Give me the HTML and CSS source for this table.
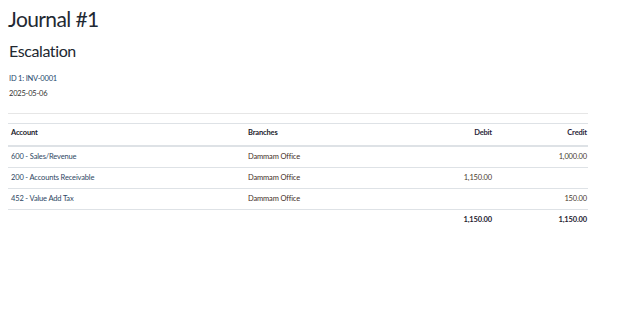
FILE: index.html
```html
<!DOCTYPE html>
<html>
<head>
<meta charset="utf-8">
<link rel="stylesheet" href="styles.css">
</head>
<body>
<div class="page">
  <h1 class="title">Journal #1</h1>
  <h2 class="subtitle">Escalation</h2>
  <div class="meta">
    <p class="meta-id">ID 1: INV-0001</p>
    <p class="meta-date">2025-05-06</p>
  </div>
  <hr class="divider">
  <table class="journal">
    <colgroup>
      <col class="c-account">
      <col class="c-branch">
      <col class="c-debit">
      <col class="c-credit">
    </colgroup>
    <thead>
      <tr>
        <th class="left">Account</th>
        <th class="left">Branches</th>
        <th class="num">Debit</th>
        <th class="num last">Credit</th>
      </tr>
    </thead>
    <tbody>
      <tr>
        <td class="acct">600 - Sales/Revenue</td>
        <td class="branch">Dammam Office</td>
        <td class="num"></td>
        <td class="num last">1,000.00</td>
      </tr>
      <tr>
        <td class="acct">200 - Accounts Receivable</td>
        <td class="branch">Dammam Office</td>
        <td class="num">1,150.00</td>
        <td class="num last"></td>
      </tr>
      <tr>
        <td class="acct">452 - Value Add Tax</td>
        <td class="branch">Dammam Office</td>
        <td class="num"></td>
        <td class="num last">150.00</td>
      </tr>
    </tbody>
    <tfoot>
      <tr>
        <td></td>
        <td></td>
        <td class="num total">1,150.00</td>
        <td class="num total last">1,150.00</td>
      </tr>
    </tfoot>
  </table>
</div>
</body>
</html>
```

FILE: styles.css
```css
html, body {
  margin: 0;
  padding: 0;
  background: #ffffff;
}
body {
  font-family: Lato, "Open Sans", sans-serif;
  color: #212529;
}
.page {
  padding: 0 37px 0 8px;
}
.title {
  margin: 0;
  padding-top: 6px;
  font-size: 21px;
  line-height: 26px;
  font-weight: 400;
  letter-spacing: -0.6px;
  color: #1f2933;
}
.subtitle {
  margin: 9px 0 0 1px;
  font-size: 16px;
  line-height: 20px;
  font-weight: 400;
  letter-spacing: -0.4px;
  color: #222831;
}
.meta {
  margin: 10px 0 0 1px;
}
.meta p {
  margin: 0;
  font-size: 7.5px;
  line-height: 15px;
  letter-spacing: -0.2px;
}
.meta-id { color: #24476a; }
.meta-date { color: #333333; }
.divider {
  margin: 12px 0 0 0;
  border: 0;
  border-top: 1px solid #e6e6e6;
  height: 0;
}
.journal {
  margin-top: 9px;
  width: 580px;
  border-collapse: collapse;
  table-layout: fixed;
  font-size: 7.5px;
  letter-spacing: -0.15px;
}
.c-account { width: 237px; }
.c-branch { width: 155px; }
.c-debit { width: 95px; }
.c-credit { width: 93px; }
.journal th, .journal td {
  padding: 4px 3px;
  line-height: 12px;
  white-space: nowrap;
}
.journal th.last, .journal td.last {
  padding-right: 1px;
}
.journal thead th {
  border-top: 1px solid #dee2e6;
  border-bottom: 2px solid #dee2e6;
  padding-top: 3px;
  padding-bottom: 6px;
  font-weight: 700;
  color: #1c1c2b;
}
.journal tbody td {
  border-bottom: 1px solid #dee2e6;
}
.left { text-align: left; }
.num { text-align: right; }
.acct { color: #2e4763; }
.branch { color: #3f2e1f; }
.journal tbody .num { color: #4a3b30; }
.total { font-weight: 700; color: #1e2230; }
.journal thead th.num { color: #2b1f3a; }
```
